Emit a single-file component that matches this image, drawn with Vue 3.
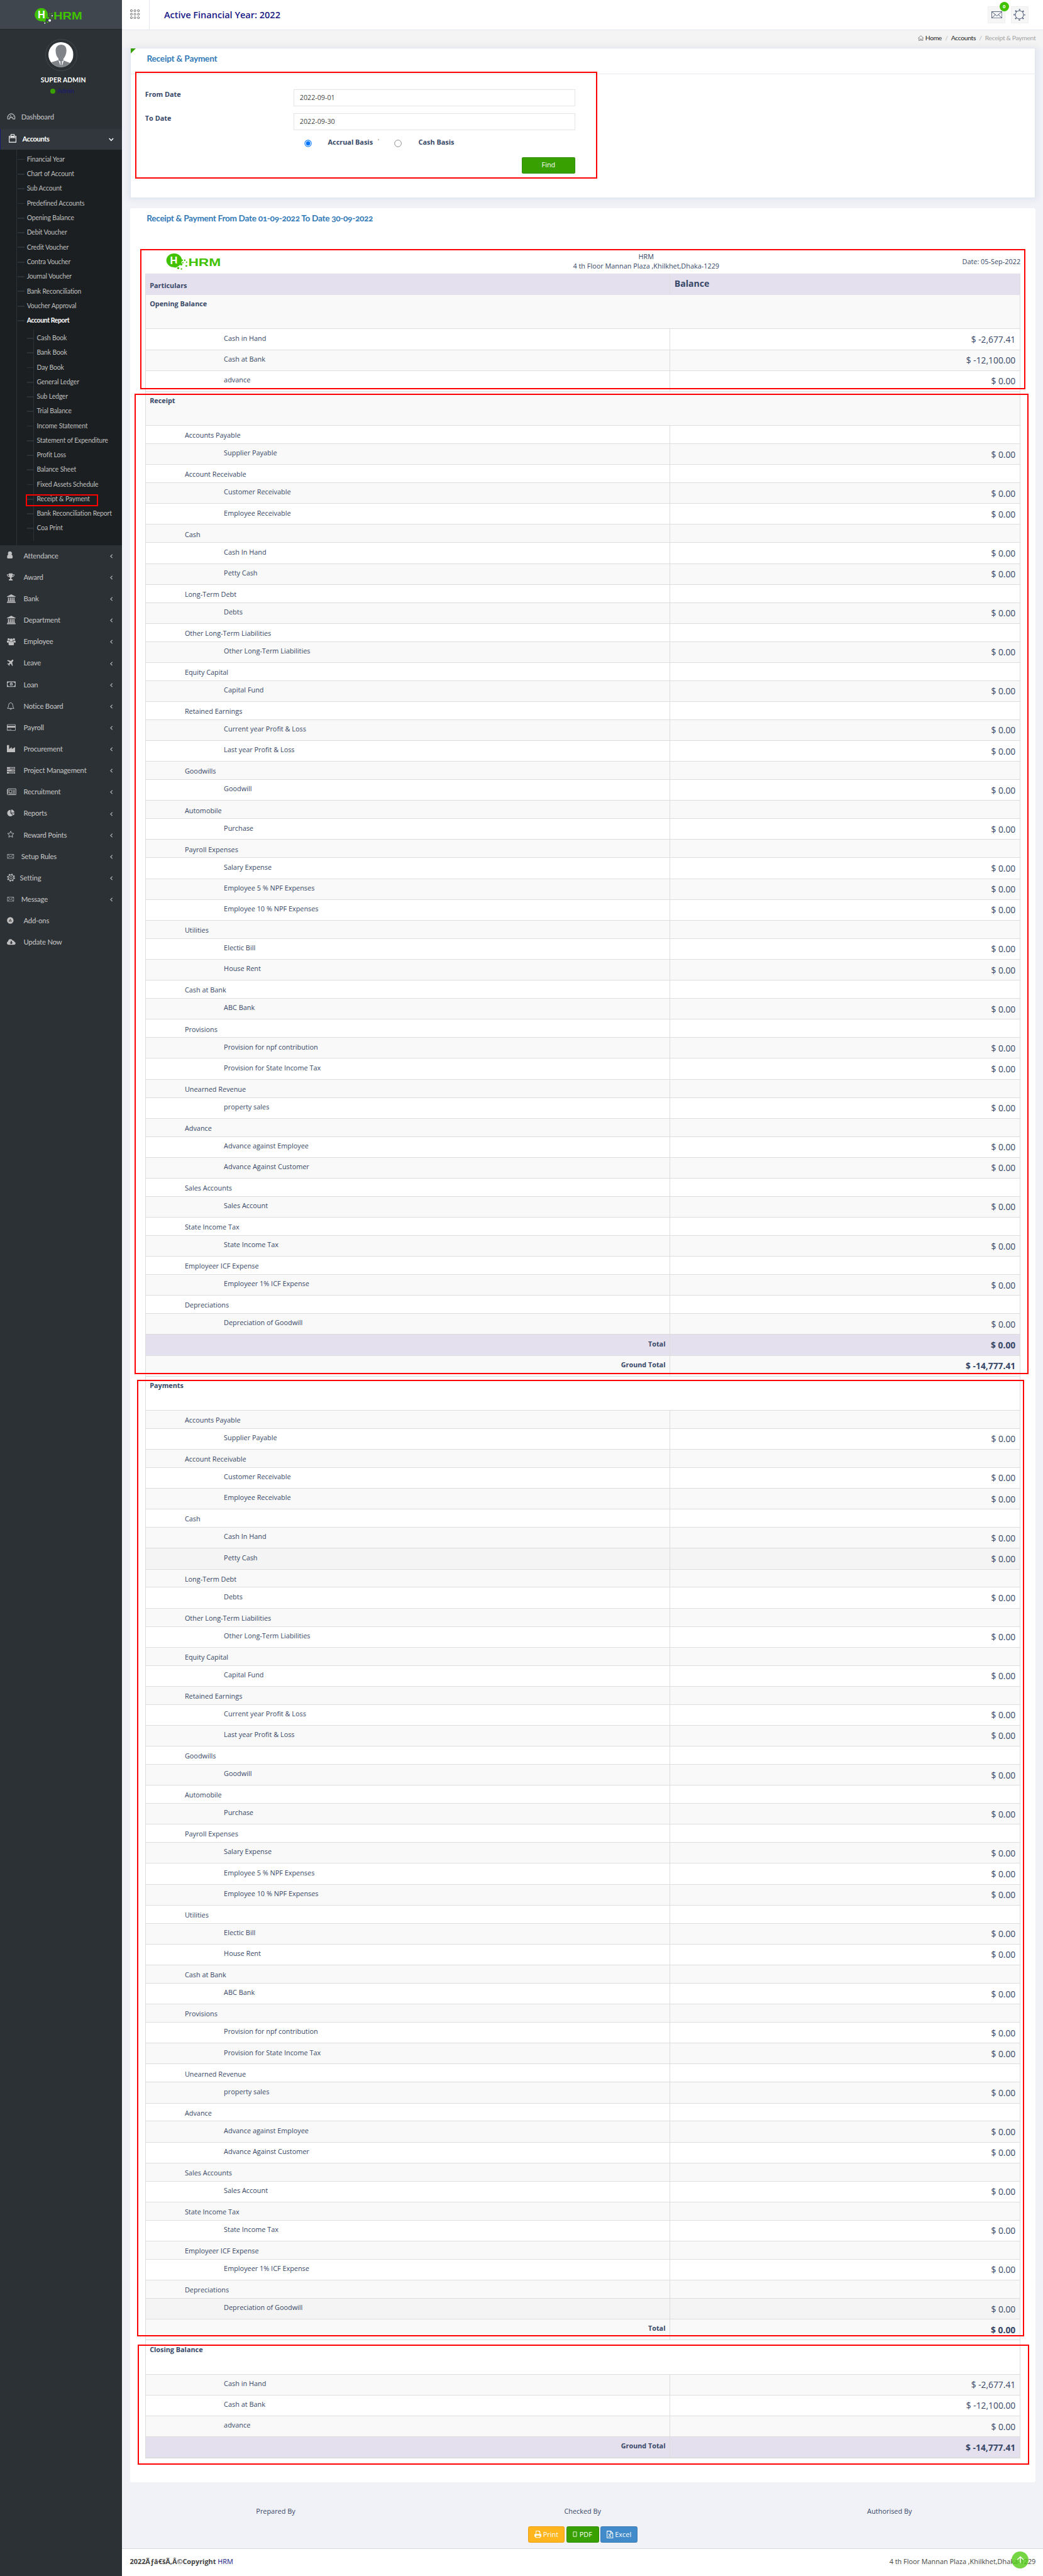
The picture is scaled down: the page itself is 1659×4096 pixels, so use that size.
<script setup>
const accountLinks = ['Financial Year', 'Chart of Account', 'Sub Account', 'Predefined Accounts', 'Opening Balance', 'Debit Voucher', 'Credit Voucher', 'Contra Voucher', 'Journal Voucher', 'Bank Reconciliation', 'Voucher Approval', 'Account Report']
const reportLinks = ['Cash Book', 'Bank Book', 'Day Book', 'General Ledger', 'Sub Ledger', 'Trial Balance', 'Income Statement', 'Statement of Expenditure', 'Profit Loss', 'Balance Sheet', 'Fixed Assets Schedule', 'Receipt & Payment', 'Bank Reconciliation Report', 'Coa Print']

const bank = '<path d="M8 0 16 4v1H0V4zM2 6h2v6H2zM5.5 6h2v6h-2zM8.7 6h2v6h-2zM12 6h2v6h-2zM1 12h14v1.3H1zM0 14h16v1.6H0z"/>'
const mail = '<path d="M1 4h11.500v7.500H1zM1 4l5.700 4.500L12.500 4M1 11.500l4.300-4M12.500 11.500 8.200 7.500" fill="none" stroke="currentColor" stroke-width=".8"/>'
const menu = [
  ['Attendance', '<path d="M5.500 1a3.200 3.400 0 0 1 3 5.600q2 .6 2.200 4.400-.2 3-1.700 3H2q-1.700 0-1.700-2 0-4.500 2.300-5.400A3.200 3.400 0 0 1 5.500 1z"/>', 1],
  ['Award', '<path d="M3.500 1h7v1.500H14q0 4.500-4.500 5Q8.300 9 8 9.500q0 2 2.500 2.500v2h-7v-2Q6 11.500 6 9.500 5.700 9 4.500 7.500 0 7 0 2.500h3.500zM1.200 3.700q.3 2 2.600 2.600L3.500 3.700zM12.800 3.700h-2.300l-.3 2.600q2.300-.6 2.600-2.600z" fill-rule="evenodd"/>', 1],
  ['Bank', bank, 1],
  ['Department', bank, 1],
  ['Employee', '<circle cx="3.200" cy="4" r="2.100"/><circle cx="12.800" cy="4" r="2.100"/><circle cx="8" cy="5.500" r="3"/><path d="M0 7q2-1.500 4.300 0L5 9 3 10H0zM16 7q-2-1.500-4.300 0L11 9l2 1h3zM3 13q0-5 2.500-4.800Q8 10 10.500 8.200 13 8 13 13q0 2-1.500 2h-7Q3 15 3 13z"/>', 1],
  ['Leave', '<path d="M11.500 2.500q-1.300-1-2.700.6L7.600 4.500 1.500 3 .5 4l4.700 3-1.900 2.400L1 9.300l-.6.700 2.400 1.400L4 14l.8-.6-.1-2.200L7 9.400l2.800 4.500 1-.9-1.200-6 1.500-1.400q1.500-1.700.4-3.100z"/>', 1],
  ['Loan', '<path d="M0 3h16v10H0zM3 4.200q0 1.500-1.800 1.600v4.400Q3 10.300 3 11.800h10q0-1.500 1.800-1.600V5.800Q13 5.700 13 4.200z" fill-rule="evenodd"/><path d="M8 5a2.600 3 0 1 1 0 6 2.600 3 0 1 1 0-6zm-.4 1.300L6.800 7v.6h.6v2h-.6v.5h2.300v-.5h-.6V6.300z" fill-rule="evenodd"/>', 1],
  ['Notice Board', '<path d="M7 1.500q4 .8 4 5 0 3.500 2 5.500H1q2-2 2-5.500 0-4.200 4-5zM5.500 12.500q.3 1.500 1.500 1.500t1.500-1.500" fill="none" stroke="currentColor" stroke-width="1.100"/>', 1],
  ['Payroll', '<path d="M1.500 2h13Q16 2 16 3.500v9q0 1.500-1.500 1.500h-13Q0 14 0 12.500v-9Q0 2 1.500 2zM1 3.500V5h14V3.500L14.500 3h-13zM1 8v4.500l.5.500h13l.5-.5V8zM2 11h2v1H2zM5 11h3v1H5z" fill-rule="evenodd"/>', 1],
  ['Procurement', '<path d="M0 14V1h4v7l5-3.500V8l6-3.500V14z"/>', 1],
  ['Project Management', '<path d="M0 2h15v3.300H0zM0 6.300h15v3.300H0zM0 10.700h15V14H0zM5.500 3.200V4.200H14v-1zM8.500 7.500v1H14v-1zM3.500 11.900v1H14v-1z" fill-rule="evenodd"/>', 1],
  ['Recruitment', '<path d="M2 2.500h14.500v11H1.500Q0.500 13.500 .5 12V4H2z" fill="none" stroke="currentColor" stroke-width="1.100"/><path d="M2 4v8M4 5h5v5H4zM10.500 5.300H15M10.500 7.500H15M10.500 9.700H15M4 11.800h11" fill="none" stroke="currentColor"/>', 1],
  ['Reports', '<path d="M6.500 2v6l4.300 4.300A6 6 0 1 1 6.500 2zM7.800 1.500A6 6 0 0 1 13.800 7.300H7.800zM8.300 8.300h5.700q-.2 2-1.700 3.800z"/>', 1],
  ['Reward Points', '<path d="m7 1.800 1.700 3.900 4.100.4-3.100 2.800.9 4.200L7 10.900l-3.600 2.200.9-4.200-3.100-2.800 4.100-.4z" fill="none" stroke="currentColor" stroke-width="1.100"/>', 1],
  ['Setup Rules', mail, 1],
  ['Setting', '<circle cx="7.500" cy="7.500" r="5" fill="none" stroke="currentColor" stroke-width="1.300"/><circle cx="7.500" cy="7.500" r="6.300" fill="none" stroke="currentColor" stroke-width="2" stroke-dasharray="2.400 2.550"/><circle cx="7.500" cy="7.500" r="2.200" fill="none" stroke="currentColor" stroke-width="1.100"/>', 1],
  ['Message', mail, 1],
  ['Add-ons', '<path d="M6.200 1.500a6 6 0 1 1 0 12 6 6 0 1 1 0-12zM6.200 4.500 3.300 9.700h5.800zm0 2 1.200 2.200H5z" fill-rule="evenodd"/>', 0],
  ['Update Now', '<path d="M3.500 13Q0 13 0 9.800 0 7.500 2.200 6.800 2.500 2.500 6.500 2.500q3 0 4.200 2.700 2.500-.5 3 2.200Q16 8.200 16 10.300 15.500 13 13 13zM7 6v3H5l3 3 3-3H9V6z" fill-rule="evenodd"/>', 0],
].map(([name, icon, caret]) => ({ name, icon, caret, gap: name === 'Setting' ? 36.5 : (icon === mail ? 39 : 43.3) }))

const ledger = [
  ['Accounts Payable', 'Supplier Payable'],
  ['Account Receivable', 'Customer Receivable', 'Employee Receivable'],
  ['Cash', 'Cash In Hand', 'Petty Cash'],
  ['Long-Term Debt', 'Debts'],
  ['Other Long-Term Liabilities', 'Other Long-Term Liabilities'],
  ['Equity Capital', 'Capital Fund'],
  ['Retained Earnings', 'Current year Profit & Loss', 'Last year Profit & Loss'],
  ['Goodwills', 'Goodwill'],
  ['Automobile', 'Purchase'],
  ['Payroll Expenses', 'Salary Expense', 'Employee 5 % NPF Expenses', 'Employee 10 % NPF Expenses'],
  ['Utilities', 'Electic Bill', 'House Rent'],
  ['Cash at Bank', 'ABC Bank'],
  ['Provisions', 'Provision for npf contribution', 'Provision for State Income Tax'],
  ['Unearned Revenue', 'property sales'],
  ['Advance', 'Advance against Employee', 'Advance Against Customer'],
  ['Sales Accounts', 'Sales Account'],
  ['State Income Tax', 'State Income Tax'],
  ['Employeer ICF Expense', 'Employeer 1% ICF Expense'],
  ['Depreciations', 'Depreciation of Goodwill'],
]
const head = (name) => ({ kind: 'head', name })
const item = (name, amount = '$ 0.00') => ({ kind: 'item', name, amount })
const total = (name, amount, tint) => ({ kind: 'total', name, amount, tint })
const entries = () => ledger.flatMap(([g, ...items]) => [{ kind: 'group', name: g }, ...items.map((n) => item(n))])
const balances = () => [item('Cash in Hand', '$ -2,677.41'), item('Cash at Bank', '$ -12,100.00'), item('advance')]

const payments = entries()
for (const r of payments) if (['Petty Cash', 'Depreciation of Goodwill'].includes(r.name)) r.active = true

const rows = [
  head('Opening Balance'), ...balances(),
  head('Receipt'), ...entries(), total('Total', '$ 0.00', true), total('Ground Total', '$ -14,777.41'),
  head('Payments'), ...payments, total('Total', '$ 0.00'),
  head('Closing Balance'), ...balances(), total('Ground Total', '$ -14,777.41', true),
]
</script>

<template>
  <div class="page">
    <aside class="side">
      <div class="brand">
        <svg width="90" height="30" viewBox="0 0 90 30">
          <circle cx="13.500" cy="12" r="12.200" fill="#41c200" />
          <text x="7" y="18.500" class="lh">H</text>
          <g fill="#41c200"><circle cx="19" cy="22.500" r="2.600" /><circle cx="26" cy="18" r="2" /><circle cx="33" cy="18" r="1.300" /><circle cx="29" cy="10" r="1" /><circle cx="33" cy="10" r="1" /><circle cx="29" cy="14" r="1" /><circle cx="25" cy="26" r="1.300" /></g>
          <g fill="#fff"><circle cx="29" cy="22.500" r="2.300" /><circle cx="20" cy="27.500" r="1.100" /><circle cx="33.500" cy="14" r="1.200" /></g>
          <text x="36" y="20.600" class="lw" textLength="53" lengthAdjust="spacingAndGlyphs">HRM</text>
        </svg>
      </div>
      <div class="user">
        <div class="ring">
          <svg width="46" height="46" viewBox="0 0 46 46">
            <clipPath id="face"><circle cx="23" cy="23" r="23" /></clipPath>
            <g clip-path="url(#face)">
              <rect width="46" height="46" fill="#fff" />
              <path d="M23.500 4.500c6.500 0 10 4.500 9.700 11-.2 7-3 12-5.700 15v3l15 6V46H3v-8l15.500-5v-3c-3-3-5.200-8-5.200-14.500 0-6.500 4-11 10.200-11z" fill="#808488" />
              <path d="M18.500 33 23 46h1.500l4-13-5 4z" fill="#fff" /><path d="m23.500 36-2 2 1 2-1 6h4.500l-1.500-6 1-2z" fill="#808488" />
            </g>
          </svg>
        </div>
        <div class="uname">SUPER ADMIN</div>
        <div class="role"><i></i><span>Admin</span></div>
      </div>
      <a class="dash">
        <svg width="16" height="12" viewBox="0 0 16 12" fill="none" stroke="currentColor" stroke-width="1.300"><path d="M1.500 10.500H5L5.500 8h5l.5 2.500h3.500Q15.500 6 12.500 3 8 -1 3.500 3 .5 6 1.500 10.500zM8 8 6.500 3.500M3.500 6l1 .5M11.500 6l1-.5" /></svg>
        Dashboard
      </a>
      <a class="acc">
        <svg width="14" height="16" viewBox="0 0 14 16" fill="none" stroke="#fff" stroke-width="1.200"><path d="M.8 4h12.400v11.200H.8zM.8 7h12.400M4 4V.8h6V4M4 6.900V5.500h6v1.400" /></svg>
        <b>Accounts</b>
        <svg class="chev" width="9" height="7" viewBox="0 0 9 7" fill="none" stroke="#fff" stroke-width="1.700"><path d="m.8 1.200 3.700 4 3.700-4" /></svg>
      </a>
      <div class="sub">
        <ul class="l1"><li v-for="n in accountLinks" :key="n" :class="{ on: n === 'Account Report' }">{{ n }}</li></ul>
        <ul class="l2"><li v-for="n in reportLinks" :key="n">{{ n }}</li></ul>
      </div>
      <a v-for="m in menu" :key="m.name" class="row">
        <span class="ico" :style="{ width: m.gap - 13 + 'px' }"><svg width="17" height="16" viewBox="0 0 17 16" fill="currentColor" v-html="m.icon"></svg></span>
        {{ m.name }}
        <svg v-if="m.caret" class="caret" width="5" height="8" viewBox="0 0 5 8" fill="none" stroke="currentColor" stroke-width="1.200"><path d="M4.300.8 1 4l3.300 3.200" /></svg>
      </a>
      <div class="mark mk-link"></div>
    </aside>

    <div class="main">
      <header class="top">
        <div class="toggle">
          <svg width="18" height="18" viewBox="0 0 18 18" fill="none" stroke="#555" stroke-width="1">
            <template v-for="y in 3" :key="y"><circle v-for="x in 3" :key="x" :cx="x * 6.5 - 4.2" :cy="y * 6.5 - 4.2" r="1.800" /></template>
          </svg>
        </div>
        <h1>Active Financial Year: 2022</h1>
        <div class="tools">
          <div class="tool">
            <svg width="20" height="13" viewBox="0 0 20 13" fill="none" stroke="#374767"><path d="M.5.500h19v12H.5zM.5.500l9.500 8 9.500-8M.5 12.500l6.800-6.400M19.500 12.500l-6.800-6.400" /></svg>
            <span class="badge">0</span>
          </div>
          <div class="tool">
            <svg width="22" height="22" viewBox="0 0 22 22" fill="none" stroke="#374767"><circle cx="11" cy="11" r="7.500" /><circle cx="11" cy="11" r="9.300" stroke-width="2.600" stroke-dasharray="2.300 5.004" stroke-dashoffset="1.150" /><circle cx="11" cy="11" r="9.300" stroke="#f6f6f6" stroke-width="1" stroke-dasharray="1.100 6.204" stroke-dashoffset=".550" /></svg>
          </div>
        </div>
      </header>
      <nav class="crumbs">
        <svg width="11" height="11" viewBox="0 0 11 11" fill="none" stroke="#666" stroke-width=".9"><path d="M.5 5.500 5.500.800l5 4.700M2 4.500v6h2.300V7h2.400v3.500H9v-6" /></svg>
        <span class="c1">Home</span><em>/</em><span>Accounts</span><em>/</em><span class="cur">Receipt &amp; Payment</span>
      </nav>

      <section class="panel filter">
        <h2>Receipt &amp; Payment</h2>
        <div class="form">
          <div class="field"><label>From Date</label><div class="input">2022-09-01</div></div>
          <div class="field"><label>To Date</label><div class="input">2022-09-30</div></div>
          <div class="radios">
            <svg width="14" height="14" viewBox="0 0 14 14"><circle cx="7" cy="7" r="6" fill="#fff" stroke="#0075ff" stroke-width="1.200" /><circle cx="7" cy="7" r="4" fill="#0075ff" /></svg>
            <b class="r1">Accrual Basis</b><span class="tick">'</span>
            <svg width="14" height="14" viewBox="0 0 14 14"><circle cx="7" cy="7" r="6.200" fill="#fff" stroke="#808080" /></svg>
            <b class="r2">Cash Basis</b>
          </div>
          <button class="find">Find</button>
        </div>
      </section>

      <section class="report">
        <h2 class="range">Receipt &amp; Payment From Date 01-09-2022 To Date 30-09-2022</h2>
        <div class="company">
          <div class="clogo">
            <svg width="102" height="30" viewBox="0 0 102 30">
              <ellipse cx="15" cy="12.800" rx="14.300" ry="12.800" fill="#41c200" />
              <text x="7.500" y="19.500" class="lh">H</text>
              <g fill="#41c200"><circle cx="17" cy="22" r="4" /><circle cx="22.500" cy="27" r="2" /><circle cx="28" cy="20" r="2.200" /><circle cx="30" cy="12.500" r="1.400" /><circle cx="34.500" cy="12.500" r="1.400" /><circle cx="31" cy="17" r="1.300" /><circle cx="38" cy="16" r="1.300" /><circle cx="37.500" cy="23" r="1.700" /><circle cx="28.500" cy="28.500" r="1.400" /></g>
              <text x="41" y="22.600" class="lw" textLength="60" lengthAdjust="spacingAndGlyphs">HRM</text>
            </svg>
          </div>
          <div class="caddr">HRM<br>4 th Floor Mannan Plaza ,Khilkhet,Dhaka-1229</div>
          <div class="cdate">Date: 05-Sep-2022</div>
        </div>
        <div class="table">
          <div class="tr th"><div class="name">Particulars</div><div class="amt">Balance</div></div>
          <div v-for="(r, i) in rows" :key="i" class="tr" :class="[r.kind, { odd: i % 2 === 0, tint: r.tint, active: r.active }]">
            <div class="name">{{ r.name }}</div>
            <div v-if="r.kind !== 'head'" class="amt">{{ r.amount }}</div>
          </div>
        </div>
      </section>

      <div class="signs"><span>Prepared By</span><span>Checked By</span><span>Authorised By</span></div>
      <div class="btns">
        <button class="print"><svg width="13" height="13" viewBox="0 0 13 13" fill="#fff"><path d="M2.500 0H9l1.800 1.800V6H12q1 0 1 1v4h-2v2H2v-2H0V7q0-1 1-1h1.500zM3.600 1.100V6h6V2.600H8V1.100zM3.200 9v2.900h6.600V9z" fill-rule="evenodd" /></svg>Print</button>
        <button class="pdf"><svg width="8" height="11" viewBox="0 0 8 11" fill="none" stroke="#fff"><path d="M1 1h6v8.500H1z" /></svg>PDF</button>
        <button class="excel"><svg width="12" height="14" viewBox="0 0 12 14" fill="none" stroke="#fff" stroke-width="1.200"><path d="M.7.700H7.500l3.800 3.800v8.800H.7zM7.300.700v4h4M3.500 5.500l4.500 6M8 5.500l-4.500 6" /></svg>Excel</button>
      </div>
      <footer class="foot">
        <div><b>2022Ãƒâ€šÃ‚Â©Copyright</b> <a>HRM</a></div>
        <div>4 th Floor Mannan Plaza ,Khilkhet,Dhaka-1229</div>
        <div class="totop"><svg width="14" height="14" viewBox="0 0 14 14" fill="none" stroke="#fff" stroke-width="1.500"><path d="M7 13V1.500M1.500 7 7 1.500 12.500 7" /></svg></div>
      </footer>
    </div>

    <div class="mark mk-form"></div>
    <div class="mark mk-open"></div>
    <div class="mark mk-receipt"></div>
    <div class="mark mk-pay"></div>
    <div class="mark mk-close"></div>
  </div>
</template>

<style>
body { margin: 0; background: #f1f2f7; }
</style>

<style scoped>
* { box-sizing: border-box; }
.page { zoom: 0.86406; position: relative; display: flex; width: 1920px; height: 4741px; background: #f1f2f7; font: 12.6px/18px "Open Sans", sans-serif; color: #374767; overflow: hidden; }
svg { display: block; flex: none; }
ul { list-style: none; margin: 0; padding: 0; }
h1, h2 { margin: 0; }

.side { position: relative; flex: none; width: 225px; background: #2c3136; font-family: Lato, "Open Sans", sans-serif; font-weight: 500; font-size: 13.1px; letter-spacing: -.22px; color: #bfbfbf; }
.brand { height: 54px; background: #3f464d; border-bottom: 1px solid #24282c; padding: 15.5px 0 0 63px; }
.lh { font: 700 19px "Liberation Sans", sans-serif; fill: #fff; letter-spacing: 0; }
.lw { font: 700 20px "Liberation Sans", sans-serif; fill: #41c200; letter-spacing: 0; }
.user { height: 141.5px; display: flex; flex-direction: column; align-items: center; padding-top: 17.5px; }
.ring { width: 59px; height: 59px; border: 1px solid #43484d; border-radius: 50%; display: flex; align-items: center; justify-content: center; }
.uname { margin: 8px 0 0 8px; font-size: 12.1px; font-weight: 700; color: #fff; letter-spacing: .08px; }
.role { display: flex; align-items: center; gap: 4.5px; margin: 2px 0 0 4px; font-size: 11px; color: #191970; }
.role i { width: 9px; height: 9px; border-radius: 50%; background: #38a000; }
.dash, .acc, .row { display: flex; align-items: center; }
.dash { height: 41.5px; padding: 0 0 3px 13px; gap: 10px; }
.acc { height: 39px; padding: 0 0 3px 15px; gap: 11px; background: #32373e; border-left: 2px solid #191970; color: #fff; }
.acc b { font-size: 13px; letter-spacing: -.5px; }
.chev { margin-left: auto; margin-right: 16px; margin-top: 5px; }
.sub { height: 728px; background: #1c1f22; padding: 3.8px 0 0 30px; font-size: 12.1px; letter-spacing: -.18px; font-weight: 400; position: relative; }
.sub::before { content: ""; position: absolute; left: 30px; top: 0; bottom: 0; width: 1px; background: #2d3237; }
.sub li { height: 27px; display: flex; align-items: center; white-space: nowrap; }
.sub li::before { content: ""; width: 13px; height: 2px; background: #2d3237; }
.l1 li::before { margin: 0 4.4px 0 2px; }
.l1 .on { color: #fff; font-weight: 700; letter-spacing: -.42px; }
.l2 { position: relative; margin: 5.4px 0 0 19.5px; }
.l2::before { content: ""; position: absolute; left: 12px; top: -3px; height: 389px; width: 1px; background: #2d3237; }
.l2 li { height: 26.92px; }
.l2 li::before { margin-right: 5.3px; }
.row { height: 39.54px; padding: 0 0 2.8px 13px; }
.ico { flex: none; }
.caret { margin-left: auto; margin-right: 18px; margin-top: 2px; }

.main { flex: 1; display: flex; flex-direction: column; }
.top { height: 55px; display: flex; background: #fff; border-bottom: 1px solid #e1e6ef; }
.toggle { width: 50px; border-right: 1px solid #e1e6ef; padding: 17px 0 0 15px; }
h1 { flex: 1; padding-left: 27px; font: 600 16.8px/54px "Open Sans", sans-serif; color: #191984; }
.tools { display: flex; gap: 9.5px; padding: 11px 27px 0 0; }
.tool { position: relative; width: 32.5px; height: 32px; background: #f6f6f6; border: 1px solid #efefef; display: flex; align-items: center; justify-content: center; }
.badge { position: absolute; left: 20px; top: -9px; width: 18px; height: 18px; border-radius: 50%; background: #41c200; color: #fff; font: 700 9px/18px "Open Sans", sans-serif; text-align: center; }
.crumbs { height: 33px; background: #f4f4f4; display: flex; align-items: center; justify-content: flex-end; padding: 0 13.5px 3px 0; font: 500 12px/18px Lato, sans-serif; letter-spacing: -.42px; color: #333; }
.c1 { margin-left: 3px; }
.crumbs em { width: 17px; text-align: center; color: #bbb; font-style: normal; }
.cur { color: #aaa; }

.panel { margin: 0 13.5px 0 15px; background: #fff; }
h2 { font: 700 15.8px/20px Lato, "Open Sans", sans-serif; color: #337ab7; letter-spacing: -.24px; font-variant-numeric: oldstyle-nums; }
.filter { position: relative; height: 277px; border: 1px solid #e1e6ef; box-shadow: 0 0 12px 2px rgba(55, 71, 140, .08); }
.filter::before { content: ""; position: absolute; left: 0; top: 0; border-top: 10px solid #38a000; border-right: 10px solid transparent; }
.filter h2 { height: 48px; padding: 9px 0 0 29px; border-bottom: 1px solid #e8ebf1; }
.form { width: 818px; padding: 27px 0 0 26px; display: flex; flex-direction: column; }
.field { display: flex; justify-content: space-between; height: 44px; font-weight: 700; }
.input { width: 519px; height: 31px; border: 1px solid #e4e5e7; padding: 0 10.5px; font-weight: 400; line-height: 29.5px; font-size: 12.4px; color: #444; }
.radios { height: 37px; padding-left: 293px; display: flex; align-items: flex-start; }
.radios svg { margin-top: 4.5px; }
.r1 { margin-left: 29.5px; }
.tick { width: 14px; text-align: center; padding-left: 7px; color: #8a5a4a; font-size: 11px; line-height: 16px; }
.radios svg + .r2 { margin-left: 31px; }
.tick + svg { margin-left: 25px; }
.find { align-self: flex-end; width: 99px; height: 30px; background: #38a000; border: 1px solid #318d01; border-radius: 2px; color: #fff; font: 12.6px "Open Sans", sans-serif; padding: 0 0 2px; }

.report { margin: 18px 13.5px 0 14px; height: 4184.5px; background: #fff; border-radius: 4px; padding: 9.5px 28px 0; }
.range { padding-left: 3px; letter-spacing: -.36px; }
.company { height: 90.5px; display: flex; padding-top: 50.4px; }
.clogo { width: 610px; padding: 4px 0 0 38px; }
.caddr { width: 625px; text-align: center; }
.cdate { flex: 1; text-align: right; padding-top: 9px; white-space: nowrap; }
.table { border: 1px solid #ddd; border-top: 0; width: 1611.5px; }
.tr { display: flex; height: 38.445px; border-bottom: 1px solid #ddd; }
.tr > div { padding: 7.3px 8px 0 7.5px; }
.name { flex: none; width: 966px; border-right: 1px solid #ddd; }
.tr .amt { flex: 1; text-align: right; font-size: 16px; line-height: 24px; padding-top: 7.6px; }
.odd { background: #f9f9f9; }
.active { background: #f4f4f4; }
.tr.th { height: 40px; background: #e5e0ed; border-color: #e5e0ed; }
.tr.th .name { padding-top: 13px; font-weight: 700; }
.tr.th .amt { text-align: left; font-size: 16.3px; font-weight: 700; padding-top: 8px; }
.tr.head { height: 62.68px; font-weight: 700; }
.tr.head .name { border: 0; font-size: 12.55px; }
.tr.item .name { padding-left: 144px; }
.tr.group { height: 33.41px; }
.tr.group .name { padding: 8.3px 0 0 72px; }
.total { font-weight: 700; }
.total .name { text-align: right; font-size: 12.5px; }
.total.tint { background: #e5e0ed; }

.signs { display: flex; padding-top: 45px; height: 81px; text-align: center; }
.signs span { flex: 1; }
.btns { display: flex; justify-content: center; gap: 3px; height: 40.5px; padding-left: 1px; }
.btns button { display: flex; align-items: center; justify-content: center; gap: 3px; height: 31px; border: 1px solid; border-radius: 3px; color: #fff; font: 12.6px "Open Sans", sans-serif; padding: 0; }
.btns .print { width: 67.5px; background: #ffb61e; border-color: #ee9f10; }
.btns .pdf { width: 60px; gap: 4px; background: #38a000; border-color: #318d01; }
.btns .excel { width: 68.5px; background: #428bca; border-color: #3a7ab0; }
.foot { position: relative; flex: 1; display: flex; justify-content: space-between; background: #fff; border-top: 1px solid #d5d9e0; padding: 14px 13.5px 0 14px; color: #444; }
.foot a { color: #191984; }
.totop { position: absolute; left: 1637.5px; top: 5px; width: 31px; height: 31px; border-radius: 50%; background: rgba(82, 202, 20, .8); display: flex; align-items: center; justify-content: center; }

.mark { position: absolute; border: 2.4px solid #f00; }
.mk-link { left: 47px; top: 910px; width: 133px; height: 21.5px; }
.mk-form { left: 249px; top: 132px; width: 851px; height: 197px; }
.mk-open { left: 258px; top: 458px; width: 1630px; height: 258.5px; }
.mk-receipt { left: 248px; top: 724px; width: 1645px; height: 1804.5px; }
.mk-pay { left: 252px; top: 2539px; width: 1633px; height: 1761px; }
.mk-close { left: 254px; top: 4315px; width: 1640px; height: 221px; }
</style>
